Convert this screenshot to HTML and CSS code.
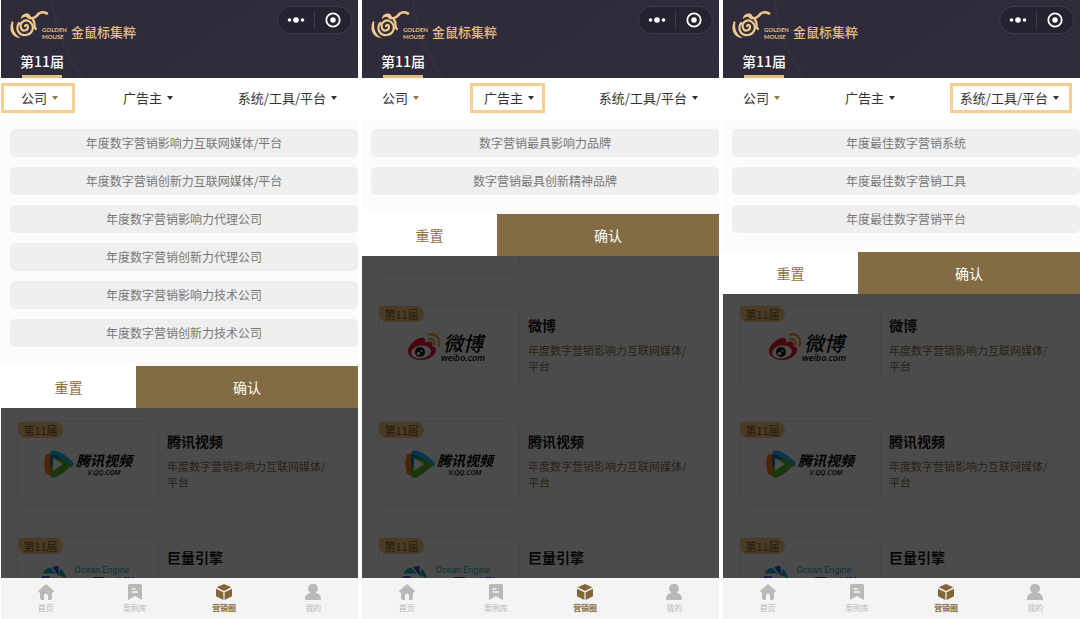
FILE: index.html
```html
<!DOCTYPE html>
<html lang="zh-CN">
<head>
<meta charset="utf-8">
<title>金鼠标集粹</title>
<link rel="stylesheet" href="styles.css">
</head>
<body>
<svg class="defs" aria-hidden="true">
  <symbol id="mouse" viewBox="0 0 40 30">
    <path d="M2 11C-2 20 2 28 11 28C5 25 2 19 3.500 12Z" fill="#f0ca8c"/>
    <path d="M11 9C11 5 15 2.500 19 4L22 8C18 6 15 6 11 9Z" fill="#f0ca8c"/>
    <g fill="none" stroke="#f0ca8c" stroke-linecap="round">
      <path d="M17 6C20 10 25 8 27 5.500C29 2 33 1.500 37 3.500" stroke-width="2.600"/>
      <path d="M9 13C5 19 9 26 16 25C23 24 25 16 20 12C15 8 9 13 11 18C12 22 18 21 18 17C18 15 16 14 15 16" stroke-width="2.200"/>
      <path d="M23 10C26 12 23 17 26 19" stroke-width="2.200"/>
    </g>
  </symbol>
  <symbol id="weibo" viewBox="0 0 34 28">
    <path d="M13 5C8 6 1 13 1 18C1 24 8 27 14 27C22 27 29 22 29 17C29 14 27 13 25 13C27 9 23 7 18 10C19 5 17 4 13 5Z" fill="#e6162d"/>
    <ellipse cx="14" cy="19" rx="10" ry="6.500" fill="#fff" transform="rotate(-8 14 19)"/>
    <circle cx="13" cy="19" r="5" fill="#111"/>
    <circle cx="11.500" cy="20.500" r="1.700" fill="#fff"/><circle cx="14.500" cy="18" r="1" fill="#fff"/>
    <path d="M22 1.500C29 0 34 6 31.500 12.500M22.500 6C26 5.500 28 8 27 11" fill="none" stroke="#ff9a2e" stroke-width="2.400" stroke-linecap="round"/>
  </symbol>
  <symbol id="tencent" viewBox="0 0 30 28">
    <path d="M1 7C1 4 4 3 7 4V25C3 26 1 23 1 20C0 16 0 11 1 7Z" fill="#ff7a1a"/>
    <path d="M6 3C7 0 10 0 13 1C19 3 25 8 29 12C31 14 29 16 27 17L8 8Z" fill="#22b5f5"/>
    <path d="M6 6C6 3 9 4 12 6L28 14C24 20 18 24 12 27C8 29 6 27 6 24Z" fill="#58b52b"/>
    <path d="M6 4C10 4 15 6 19 10L10 8L8 16L6 18Z" fill="#137bb8"/>
    <path d="M9 8L19 14L9 21Z" fill="#fff"/>
  </symbol>
  <symbol id="ocean" viewBox="0 0 28 28">
    <path d="M1 8C2 5 5 2 9 2L15 8Z" fill="#18a8bd"/>
    <path d="M11 1C14 0 17 0 18 0V11Z" fill="#2a50c8"/>
    <path d="M20 3C23 5 25 9 26 13L18 10Z" fill="#18a8bd"/>
    <path d="M0 11H9L3 20C1 17 0 14 0 11Z" fill="#2a50c8"/>
    <path d="M26 16C26 20 23 24 20 26L18 16Z" fill="#2a50c8"/>
    <path d="M6 23L10 15L16 27C12 28 8 26 6 23Z" fill="#18a8bd"/>
  </symbol>
  <symbol id="home" viewBox="0 0 16 16"><path d="M8 0L16 7L15 8.500H14V14Q14 16 12 16H10V11Q8 8 6 11V16H4Q2 16 2 14V8.500H1L0 7Z" fill="currentColor"/></symbol>
  <symbol id="cases" viewBox="0 0 16 16"><path d="M1 1.500Q1 0 2.500 0H13.500Q15 0 15 1.500V16L8 12L1 16Z" fill="currentColor"/><path d="M4.500 5H8.500M4.500 8H11" stroke="#f4f4f4" stroke-width="1.300"/></symbol>
  <symbol id="cube" viewBox="0 0 16 16"><path d="M8 0L15.300 3.300L8 7L0.700 3.300ZM0 4.700L7.400 8.300V16L0 12.300ZM16 4.700L8.600 8.300V16L16 12.300Z" fill="currentColor"/></symbol>
  <symbol id="user" viewBox="0 0 16 16"><path d="M8 0A4.500 4.500 0 0 1 10.500 8.500C14 9.500 16 12 16 15Q16 16 15 16H1Q0 16 0 15C0 12 2 9.500 5.500 8.500A4.500 4.500 0 0 1 8 0Z" fill="currentColor"/></symbol>
</svg>
<main class="board" id="board"></main>
<script src="app.js"></script>
</body>
</html>
```
FILE: styles.css
```css
* { box-sizing: border-box; }
body {
  margin: 0;
  background: #fff;
  color: #333;
  font-family: "Noto Sans CJK SC", sans-serif;
  font-size: 12px;
}
button { border: 0; padding: 0; margin: 0; background: none; font: inherit; color: inherit; }
a { color: inherit; text-decoration: none; }
h1, h2, p { margin: 0; font-weight: 400; }
.defs { position: absolute; width: 0; height: 0; }
.board {
  display: grid;
  grid-template-columns: repeat(3, minmax(0, 1fr));
  gap: 4px;
  height: 100vh;
  padding-left: 1px;
}
.phone { display: flex; flex-direction: column; min-height: 0; overflow: hidden; }

.header {
  display: flex;
  flex-direction: column;
  justify-content: space-between;
  height: 78px;
  flex: none;
  padding: 6px 6px 0 9px;
  color: #fff;
  background:
    radial-gradient(circle at 220px -20px, transparent 168px, #36313f 170px, transparent 172px),
    linear-gradient(145deg, #302b3a 55%, transparent 75%),
    repeating-linear-gradient(145deg, #302b3a 0 3px, #35303f 3px 4px);
}
.topline { display: flex; justify-content: space-between; align-items: flex-start; }
.brand { display: flex; align-items: flex-end; color: #e5bd80; padding-top: 4px; }
.brand-mark { width: 40px; height: 30px; }
.brand-en { font: 700 6px/7px Lato, sans-serif; margin-left: -8px; width: 28px; }
.brand-cn { font-size: 13px; line-height: 16px; font-weight: 500; margin-left: 1px; }
.capsule {
  display: flex;
  align-items: center;
  width: 75px;
  height: 28px;
  border: 1px solid #403b48;
  border-radius: 14px;
  background: #26222f;
}
.capsule button { flex: 1; height: 18px; display: grid; place-items: center; }
.capsule button + button { border-left: 1px solid #403b48; }
.edition { align-self: flex-start; margin-left: 10px; font-size: 14px; line-height: 20px; font-weight: 500; }
.edition::after { content: ""; display: block; height: 3px; margin: 4px 2px 0; background: #e5bd80; }

.filters {
  display: flex;
  justify-content: space-between;
  flex: none;
  height: 42px;
  padding: 5px 8px 0 0;
}
.filter {
  display: flex;
  align-items: center;
  gap: 5px;
  height: 30px;
  padding: 0 14px 1px 17px;
  border: 3px solid transparent;
  font-size: 13px;
  white-space: nowrap;
}
.filter:nth-child(2) { padding: 0 8px 1px 11px; margin-right: 10px; }
.filter:nth-child(3) { padding: 0 10px 1px 7px; }
.filter.active { border-color: #f4cf91; }
.filter::after { content: ""; border: 3px solid transparent; border-top: 4px solid currentColor; border-bottom: 0; }
.filter:first-child::after { color: #957746; }

.options {
  display: flex;
  flex-direction: column;
  gap: 10px;
  flex: none;
  padding: 9px 0 19px 9px;
  background: #fcfcfc;
}
.option { height: 28px; padding-bottom: 2px; border-radius: 5px; background: #efefef; color: #777; font-size: 12px; }
.actions { display: grid; grid-template-columns: 135px 1fr; flex: none; height: 42px; }
.actions button { font-size: 14px; color: #8f7142; background: #fff; }
.actions .confirm { color: #fff; background: #836c43; }

.feed {
  position: relative;
  flex: 1;
  min-height: 0;
  display: flex;
  flex-direction: column;
  justify-content: flex-end;
  gap: 18px;
  padding: 0 9px;
  overflow: hidden;
  background: #f7f7f7;
}
.feed::after { content: ""; position: absolute; inset: 0; background: rgba(0, 0, 0, .7); }
.card {
  display: flex;
  gap: 8px;
  height: 98px;
  flex: none;
  padding: 7px;
  border-radius: 8px;
  background: #fcfcfc;
}
.card.last { height: 48px; overflow: hidden; border-radius: 8px 8px 0 0; padding-bottom: 0; }
.thumb {
  position: relative;
  display: flex;
  justify-content: center;
  align-items: center;
  flex: none;
  width: 142px;
  height: 84px;
  border: 1px solid #e8e8e8;
  border-radius: 10px;
}
.badge {
  position: absolute;
  top: 0;
  left: 0;
  width: 45px;
  border-radius: 2px 9px 9px 9px;
  background: #f3c67a;
  color: #836032;
  font-size: 11px;
  line-height: 16px;
  text-align: center;
}
.logo { display: flex; align-items: center; color: #000; }
.logo-text { display: flex; flex-direction: column; align-items: center; font-style: italic; }
.weibo { padding-right: 6px; }
.weibo svg { width: 34px; height: 28px; }
.weibo b { font-size: 20px; line-height: 22px; font-weight: 500; }
.weibo small { font: italic 600 9px/8px "Open Sans", sans-serif; }
.tencent { padding-top: 2px; }
.tencent svg { width: 30px; height: 28px; margin-right: 2px; }
.tencent b { font-size: 14px; line-height: 17px; }
.tencent small { font: italic 600 7px/7px "Open Sans", sans-serif; }
.ocean { gap: 6px; padding-left: 5px; }
.ocean svg { width: 26px; height: 28px; }
.ocean .logo-text { font-style: normal; align-items: flex-start; }
.ocean b { order: 2; font-size: 16px; line-height: 18px; color: #3936d8; }
.ocean small { font: 9px/10px Roboto, sans-serif; color: #18a8b8; }
.info { flex: 1; min-width: 0; padding: 10px 10px 0 0; }
.info h2 { font-size: 14px; line-height: 20px; font-weight: 700; color: #111; }
.info p { margin-top: 7px; font-size: 11px; line-height: 16px; color: #8c7048; }

.tabs { display: grid; grid-template-columns: repeat(4, 1fr); flex: none; height: 41px; background: #f4f4f4; }
.tab { display: flex; flex-direction: column; align-items: center; gap: 2px; padding-top: 6px; font-size: 8px; line-height: 12px; color: #b9b9b9; }
.tab svg { width: 16px; height: 16px; }
.tab.current { color: #836538; font-weight: 700; }
```
FILE: app.js
```js
const phones = [
  { active: 0, first: 2, options: ["年度数字营销影响力互联网媒体/平台", "年度数字营销创新力互联网媒体/平台", "年度数字营销影响力代理公司", "年度数字营销创新力代理公司", "年度数字营销影响力技术公司", "年度数字营销创新力技术公司"] },
  { active: 1, first: 0, options: ["数字营销最具影响力品牌", "数字营销最具创新精神品牌"] },
  { active: 2, first: 1, options: ["年度最佳数字营销系统", "年度最佳数字营销工具", "年度最佳数字营销平台"] }
];
const category = "年度数字营销影响力互联网媒体/平台";
const logo = (id, name, sub) =>
  `<div class="logo ${id}"><svg aria-hidden="true"><use href="#${id}"/></svg><span class="logo-text"><b>${name}</b><small>${sub}</small></span></div>`;
const card = (id, name, sub, title, last) => `
  <article class="card${last ? " last" : ""}">
    <div class="thumb"><span class="badge">第11届</span>${logo(id, name, sub)}</div>
    <div class="info"><h2>${title}</h2>${last ? "" : `<p>${category}</p>`}</div>
  </article>`;
const cards = [
  `<article class="card"><div class="thumb"></div></article>`,
  card("weibo", "微博", "weibo.com", "微博"),
  card("tencent", "腾讯视频", "V.QQ.COM", "腾讯视频"),
  card("ocean", "巨量引擎", "Ocean Engine", "巨量引擎", true)
];
const tabs = [["home", "首页"], ["cases", "案例库"], ["cube", "营销圈"], ["user", "我的"]];

document.getElementById("board").innerHTML = phones.map(p => `
<section class="phone">
  <header class="header">
    <div class="topline">
      <h1 class="brand">
        <svg class="brand-mark" aria-hidden="true"><use href="#mouse"/></svg>
        <span class="brand-en">GOLDEN MOUSE</span><span class="brand-cn">金鼠标集粹</span>
      </h1>
      <div class="capsule">
        <button aria-label="更多"><svg width="18" height="8"><g fill="#fff"><circle cx="2.500" cy="4" r="1.800"/><circle cx="9" cy="4" r="2.800"/><circle cx="15.500" cy="4" r="1.800"/></g></svg></button>
        <button aria-label="关闭"><svg width="16" height="16"><circle cx="8" cy="8" r="6.700" fill="none" stroke="#fff" stroke-width="1.800"/><circle cx="8" cy="8" r="2.700" fill="#fff"/></svg></button>
      </div>
    </div>
    <a class="edition" href="#">第11届</a>
  </header>
  <nav class="filters">${["公司", "广告主", "系统/工具/平台"].map((t, i) =>
    `<button class="filter${i === p.active ? " active" : ""}">${t}</button>`).join("")}</nav>
  <div class="options">${p.options.map(o => `<button class="option">${o}</button>`).join("")}</div>
  <div class="actions"><button>重置</button><button class="confirm">确认</button></div>
  <div class="feed">${cards.slice(p.first).join("")}</div>
  <nav class="tabs">${tabs.map(([id, t]) =>
    `<a class="tab${id === "cube" ? " current" : ""}" href="#"><svg aria-hidden="true"><use href="#${id}"/></svg>${t}</a>`).join("")}</nav>
</section>`).join("");
```
